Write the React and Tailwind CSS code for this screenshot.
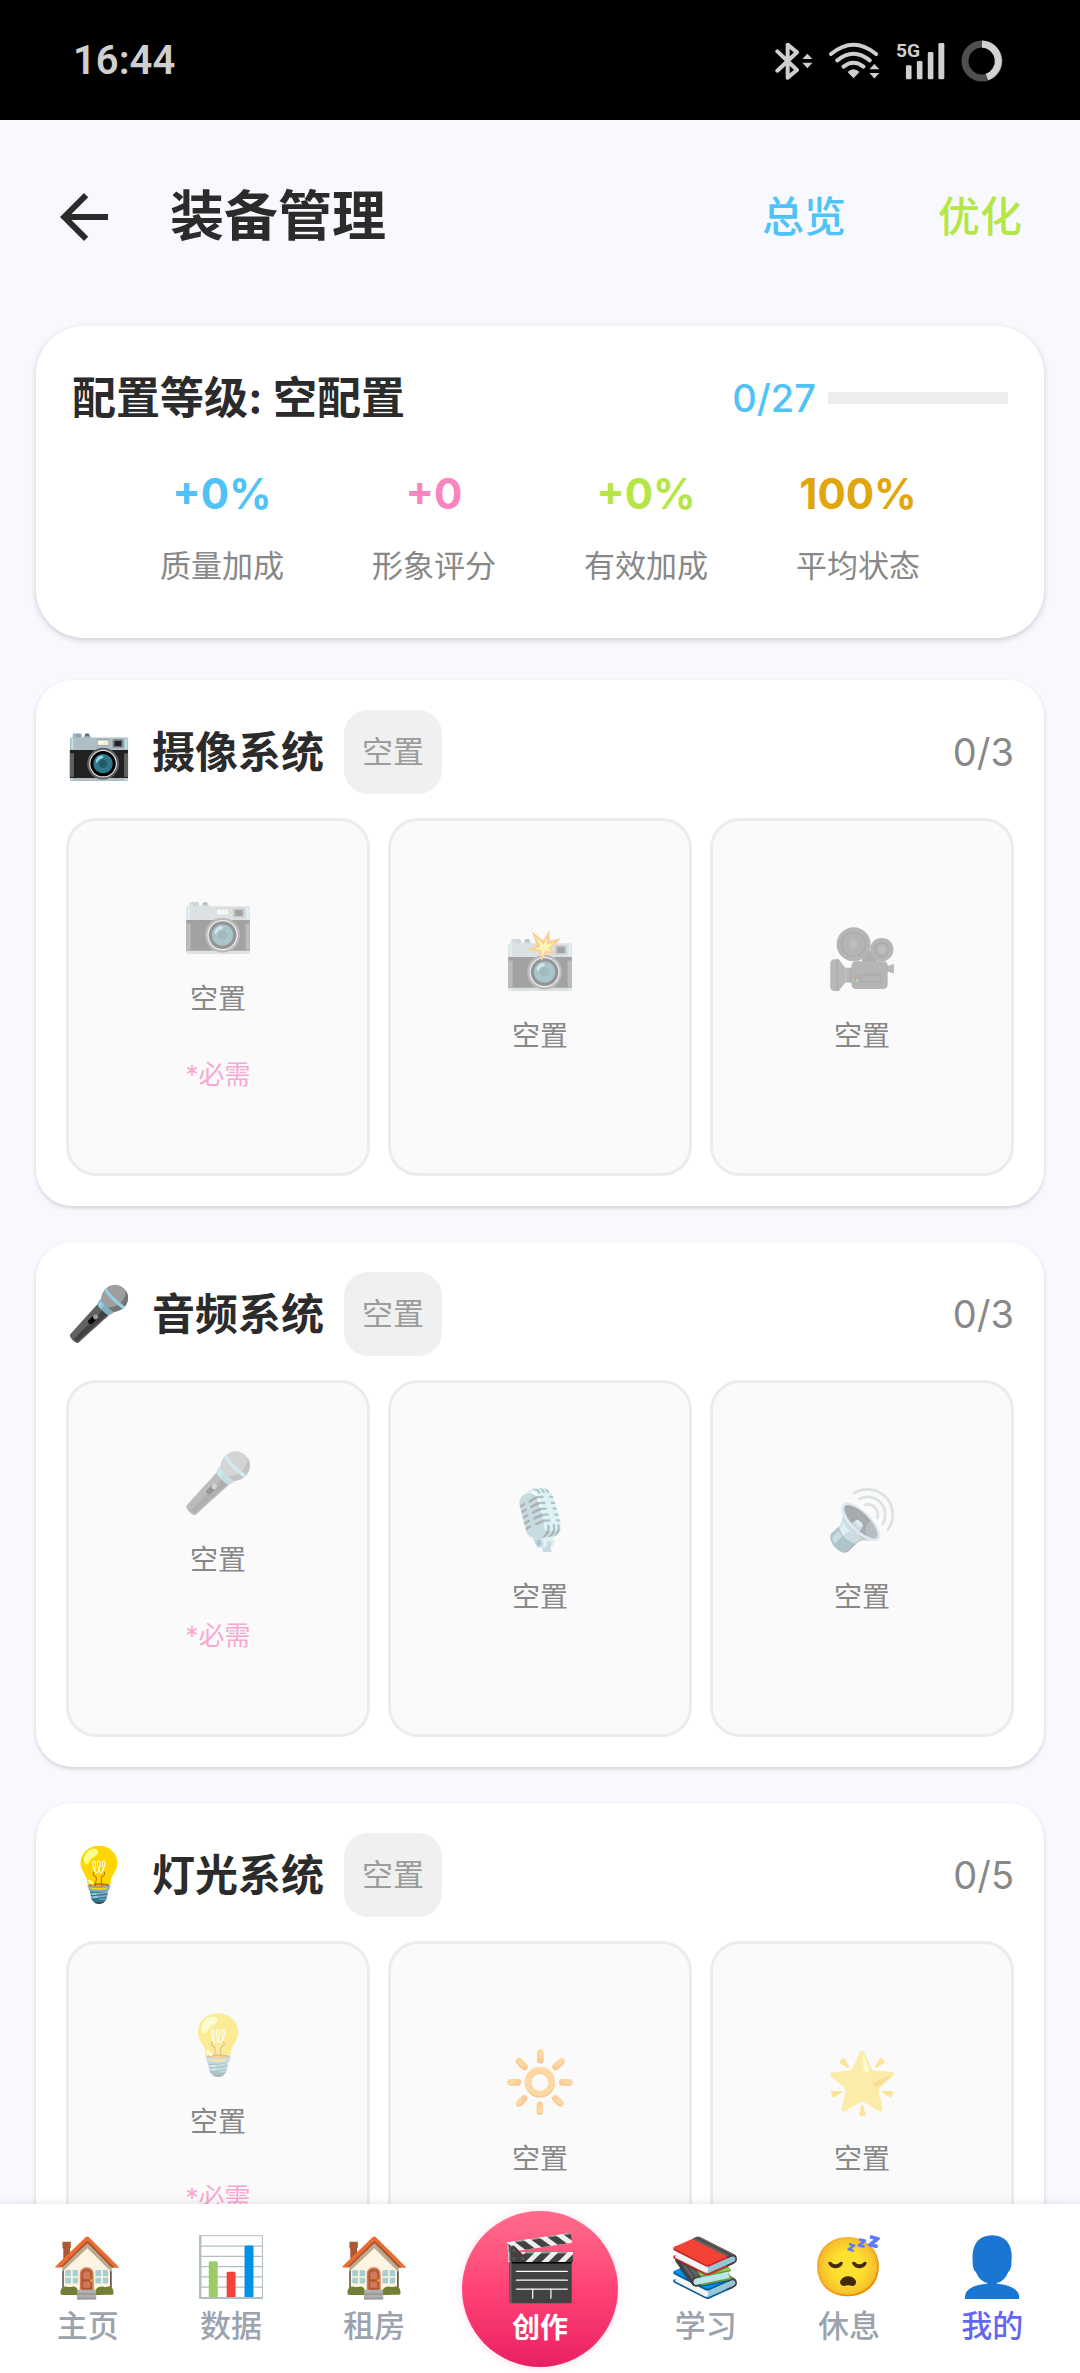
import { useState } from "react";

const stats = [
  { value: "+0%", label: "质量加成", color: "text-[#4fc3f7]" },
  { value: "+0", label: "形象评分", color: "text-[#f985c0]" },
  { value: "+0%", label: "有效加成", color: "text-[#b5e648]" },
  { value: "100%", label: "平均状态", color: "text-[#e0a60c]" },
];

const systems = [
  { icon: "📷", name: "摄像系统", count: "0/3", slots: ["📷", "📸", "🎥"] },
  { icon: "🎤", name: "音频系统", count: "0/3", slots: ["🎤", "🎙️", "🔊"] },
  { icon: "💡", name: "灯光系统", count: "0/5", slots: ["💡", "🔆", "🌟"] },
];

const leftTabs = [
  { icon: "🏠", label: "主页" },
  { icon: "📊", label: "数据" },
  { icon: "🏠", label: "租房" },
];

const rightTabs = [
  { icon: "📚", label: "学习" },
  { icon: "😴", label: "休息" },
  { icon: "👤", label: "我的" },
];

function StatusBar() {
  return (
    <div className="flex h-[120px] shrink-0 items-center justify-between bg-black pt-0.5 pr-[77px] pl-[73px] text-[#cfcfcf]">
      <span className="font-[Roboto] text-[40px] font-semibold">16:44</span>
      <div className="flex items-center gap-4">
        <svg viewBox="108 60 114 126" className="h-[42px] w-[38px]" fill="none" stroke="currentColor">
          <path d="M115 94L174 150L146 173V74L174 97L115 152" strokeWidth="12" strokeLinejoin="round" strokeLinecap="round" />
          <path d="M190 117L205 101L220 117ZM190 128H220L205 145Z" fill="currentColor" stroke="none" />
        </svg>
        <svg viewBox="266 60 154 126" className="h-[42px] w-[51px]" fill="none" stroke="currentColor">
          <path d="M272 102Q340 46 408 102M291 121Q340 81 389 121M310 140Q340 117 370 140" strokeWidth="12" strokeLinecap="round" />
          <path d="M322 156Q340 140 358 156L340 175Z" fill="currentColor" stroke="none" />
          <path d="M388 148L403 132L418 148ZM388 159H418L403 176Z" fill="currentColor" stroke="none" />
        </svg>
        <svg viewBox="460 60 148 126" className="h-[42px] w-[49px]" fill="currentColor">
          <text x="460" y="111" fontFamily="Roboto" fontSize="58" fontWeight="700">5G</text>
          <rect x="490" y="136" width="17" height="42" rx="4" />
          <rect x="523" y="123" width="17" height="55" rx="4" />
          <rect x="556" y="96" width="17" height="82" rx="4" />
          <rect x="588" y="69" width="18" height="109" rx="4" />
        </svg>
        <svg viewBox="0 0 42 42" className="h-[42px] w-[42px]" fill="none" strokeWidth="7">
          <circle cx="21" cy="21" r="17" stroke="#505050" />
          <path d="M21 4A17 17 0 0 1 26 37" stroke="#d2d2d2" />
        </svg>
      </div>
    </div>
  );
}

function Header() {
  return (
    <header className="flex h-[194px] items-center pr-[58px] pl-12">
      <button aria-label="返回" className="mr-[50px]">
        <svg viewBox="0 0 24 24" className="size-[72px]" fill="#2b2b2b">
          <path d="M20 11H7.83l5.59-5.59L12 4l-8 8 8 8 1.41-1.41L7.83 13H20v-2z" />
        </svg>
      </button>
      <h1 className="grow text-[54px] leading-[72px] font-bold">装备管理</h1>
      <div className="flex gap-[92px] text-[42px] leading-[72px] font-medium">
        <button className="text-[#4fc3f7]">总览</button>
        <button className="text-[#b5e648]">优化</button>
      </div>
    </header>
  );
}

function Summary() {
  return (
    <section className="mb-[42px] rounded-[48px] bg-white p-9 leading-[72px] shadow-[0_2px_6px_rgba(0,0,0,0.18)]">
      <div className="mb-6 flex items-center justify-between">
        <h2 className="text-[44px] font-bold">配置等级: 空配置</h2>
        <div className="flex items-center gap-3 text-[38px] font-medium text-[#4fc3f7]">
          <span>0/27</span>
          <div role="progressbar" aria-label="配置等级" aria-valuenow={0} aria-valuemax={27} className="h-3 w-[180px] bg-[#eeeeee]" />
        </div>
      </div>
      <dl className="flex justify-evenly text-center">
        {stats.map((stat) => (
          <div key={stat.label} className="flex flex-col-reverse">
            <dt className="text-[31px] text-[#888888]">{stat.label}</dt>
            <dd className={`text-[42px] font-bold ${stat.color}`}>{stat.value}</dd>
          </div>
        ))}
      </dl>
    </section>
  );
}

function Slot({ icon, required }) {
  return (
    <button className="flex aspect-[17/20] flex-col items-center justify-center gap-1.5 rounded-[30px] border-[3px] border-[#ececec] bg-[#fafafa] pt-0.5">
      <span className="font-[Noto_Color_Emoji] text-[58px] leading-[70px] opacity-40">{icon}</span>
      <span className="text-[28px] leading-[72px] text-[#888888]">空置</span>
      {required && <span className="text-[26px] leading-[68px] text-[#f7a8d2]">*必需</span>}
    </button>
  );
}

function SystemCard({ system }) {
  return (
    <section className="mb-9 rounded-[36px] bg-white p-[30px] shadow-[0_2px_4px_rgba(0,0,0,0.16)]">
      <div className="mb-6 flex items-center">
        <span className="mr-5 font-[Noto_Color_Emoji] text-[53px] leading-[72px]">{system.icon}</span>
        <h2 className="mr-5 text-[43px] leading-[72px] font-bold">{system.name}</h2>
        <span className="rounded-3xl bg-[#f0f0f0] px-[18px] py-1.5 text-[31px] leading-[72px] text-[#9c9c9c]">空置</span>
        <span className="ml-auto text-[38px] leading-[72px] text-[#888888]">{system.count}</span>
      </div>
      <div className="grid grid-cols-3 gap-[18px]">
        {system.slots.map((icon, i) => (
          <Slot key={icon} icon={icon} required={i === 0} />
        ))}
      </div>
    </section>
  );
}

function Tab({ tab, active, onSelect }) {
  return (
    <button
      onClick={() => onSelect(tab.label)}
      className={`flex flex-1 flex-col items-center pt-1 text-[31px] leading-[48px] font-medium ${active ? "text-[#6366f1]" : "text-[#9ca3af]"}`}
    >
      <span className="font-[Noto_Color_Emoji] text-[58px] leading-[70px]">{tab.icon}</span>
      {tab.label}
    </button>
  );
}

function BottomNav() {
  const [active, setActive] = useState("我的");

  return (
    <nav className="relative flex h-[169px] shrink-0 items-center bg-white px-4 shadow-[0_-2px_8px_rgba(0,0,0,0.08)]">
      {leftTabs.map((tab) => (
        <Tab key={tab.label} tab={tab} active={active === tab.label} onSelect={setActive} />
      ))}
      <button className="mx-4 flex size-[156px] flex-col items-center justify-center rounded-full bg-linear-to-b from-[#ff6b8a] via-[#ff4275] to-[#e91e63] pt-1 text-[28px] leading-[44px] font-bold text-white shadow-[0_1px_8px_rgba(233,30,99,0.15)]">
        <span className="font-[Noto_Color_Emoji] text-[64px] leading-[74px]">🎬</span>
        创作
      </button>
      {rightTabs.map((tab) => (
        <Tab key={tab.label} tab={tab} active={active === tab.label} onSelect={setActive} />
      ))}
    </nav>
  );
}

export default function App() {
  return (
    <div className="flex h-screen flex-col bg-[#f8f9ff] font-[Inter,'Noto_Sans_CJK_SC',sans-serif] text-[#2b2b2b]">
      <StatusBar />
      <main className="grow overflow-y-auto [scrollbar-width:none]">
        <Header />
        <div className="px-9 pt-3">
          <Summary />
          {systems.map((system) => (
            <SystemCard key={system.name} system={system} />
          ))}
        </div>
      </main>
      <BottomNav />
    </div>
  );
}
